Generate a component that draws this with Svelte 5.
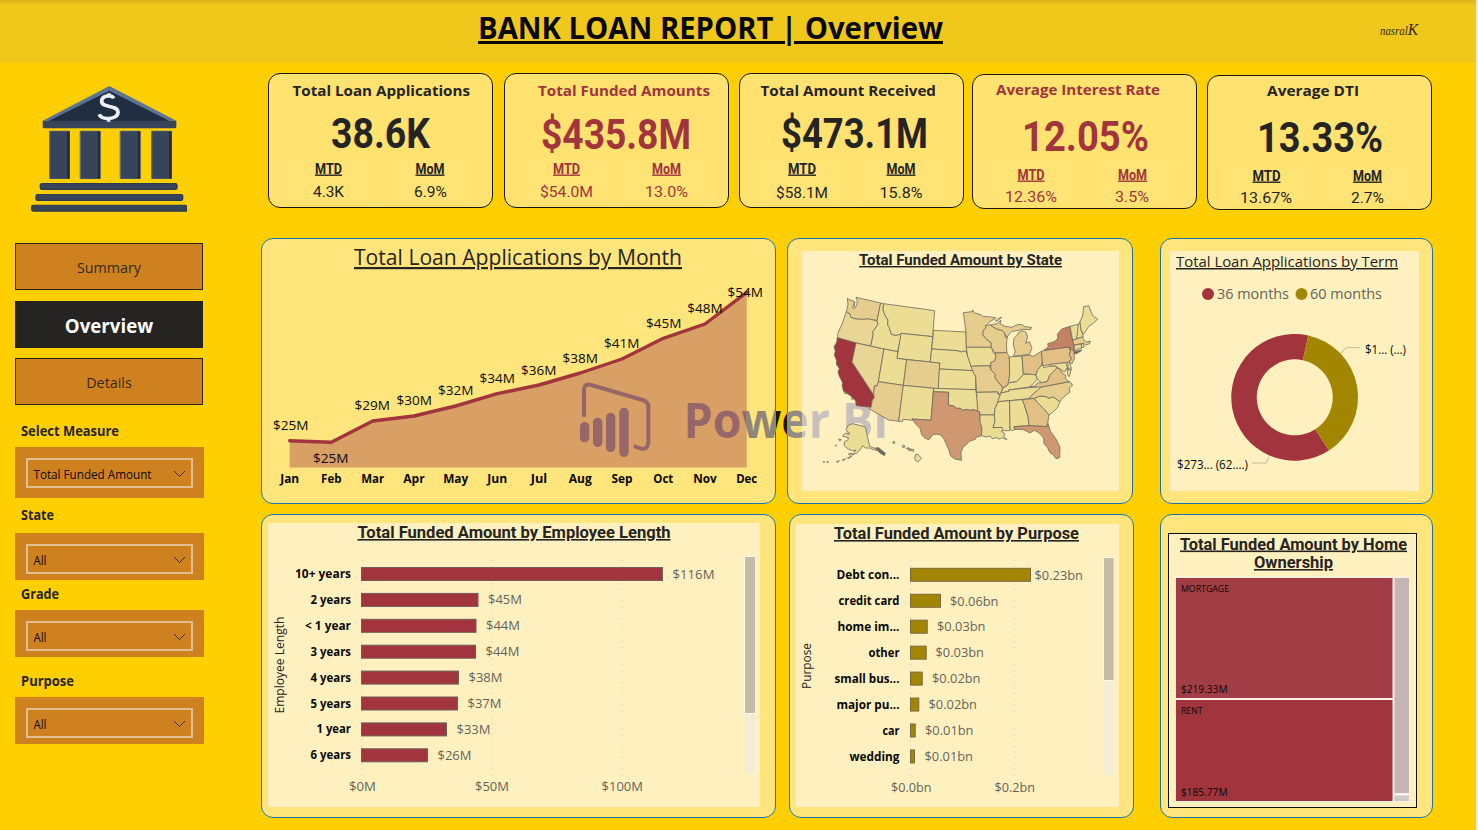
<script>
  // Text entries: [string, left x, baseline y, font size, drawn width]
  const kpis = [
    { x: 268, y: 73, gap: 0, tone: 'ink', title: ['Total Loan Applications', 292.5, 96, 15, 177.5], value: ['38.6K', 331, 148, 42.5, 99],
      heads: [['MTD', 315, 173.5, 14, 27], ['MoM', 415.5, 173.5, 14, 29]], subs: [['4.3K', 313, 197, 15.5, 31], ['6.9%', 414, 197, 15.5, 33]] },
    { x: 504, y: 73, gap: 11, tone: 'wine', title: ['Total Funded Amounts', 538, 96, 15, 172], value: ['$435.8M', 541, 149, 42.5, 150],
      heads: [['MTD', 553, 173.5, 14, 27], ['MoM', 652, 173.5, 14, 29]], subs: [['$54.0M', 540, 197, 15.5, 53], ['13.0%', 645, 197, 15.5, 43]] },
    { x: 739, y: 73, gap: 10, tone: 'ink', title: ['Total Amount Received', 760.5, 96, 15, 175.5], value: ['$473.1M', 781, 147.5, 42.5, 147],
      heads: [['MTD', 788, 173.5, 14, 28], ['MoM', 886.5, 173.5, 14, 29]], subs: [['$58.1M', 776, 198, 15.5, 52], ['15.8%', 879.5, 198, 15.5, 43]] },
    { x: 972, y: 74, gap: 8, tone: 'wine', title: ['Average Interest Rate', 996, 95, 15, 164], value: ['12.05%', 1022, 151, 42.5, 127],
      heads: [['MTD', 1017.5, 179.5, 14, 27], ['MoM', 1118, 179.5, 14, 29]], subs: [['12.36%', 1005, 202, 15.5, 52], ['3.5%', 1115, 202, 15.5, 34]] },
    { x: 1207, y: 75, gap: 10, tone: 'ink', title: ['Average DTI', 1267, 96, 15, 92], value: ['13.33%', 1257, 152, 42.5, 126],
      heads: [['MTD', 1252.5, 180.5, 14, 28], ['MoM', 1353, 180.5, 14, 29]], subs: [['13.67%', 1240, 203, 15.5, 52], ['2.7%', 1351, 203, 15.5, 33]] }
  ];

  const slicers = [
    { label: 'Select Measure', value: 'Total Funded Amount', top: 15, head: 27, h: 51, w: 98, vw: 118 },
    { label: 'State', value: 'All', top: 6, head: 29, h: 47, w: 33, vw: 13 },
    { label: 'Grade', value: 'All', top: 3, head: 27, h: 47, w: 38, vw: 13 },
    { label: 'Purpose', value: 'All', top: 13, head: 27, h: 47, w: 53, vw: 13 }
  ];

  const months = [
    ['Jan', 19, '$25M', 289.7, 440.7, 291, 430], ['Feb', 20.5, '$25M', 331.3, 442.3, 331, 463],
    ['Mar', 23, '$29M', 372.7, 421, 372.5, 410], ['Apr', 21.5, '$30M', 414, 416, 414.5, 405],
    ['May', 25, '$32M', 455.7, 406, 456, 395], ['Jun', 20, '$34M', 497.3, 393.7, 497.5, 383],
    ['Jul', 16.5, '$36M', 539, 385, 539, 375], ['Aug', 23, '$38M', 580.3, 373, 580.5, 363],
    ['Sep', 21, '$41M', 622, 359, 622, 348], ['Oct', 20, '$45M', 663.3, 338.3, 664, 328],
    ['Nov', 23.5, '$48M', 705, 324, 705.3, 313], ['Dec', 21, '$54M', 746.7, 292.3, 745.5, 297]
  ];
  const line = months.map((m) => `${m[3]},${m[4]}`).join(' ');

  const employee = [
    ['10+ years', 56, 663, '$116M', 42], ['2 years', 40.5, 478.5, '$45M', 34], ['< 1 year', 46, 476.5, '$44M', 34],
    ['3 years', 40.5, 476, '$44M', 34], ['4 years', 40.5, 459, '$38M', 34], ['5 years', 40.5, 458, '$37M', 34],
    ['1 year', 34.5, 447, '$33M', 34], ['6 years', 40.5, 428, '$26M', 34]
  ];
  const purpose = [
    ['Debt con...', 63, 1031, '$0.23bn', 1035], ['credit card', 61, 941, '$0.06bn', 950.5], ['home im...', 62, 927.7, '$0.03bn', 937.5],
    ['other', 31, 926.7, '$0.03bn', 936], ['small bus...', 65, 922.7, '$0.02bn', 932.5], ['major pu...', 63, 919.3, '$0.02bn', 929],
    ['car', 17, 915.7, '$0.01bn', 925.5], ['wedding', 50, 915, '$0.01bn', 925]
  ];

  const lo = '#ecdd95', a = '#e9d594', b = '#e7cd8d', c = '#e2bf85', d = '#cf9870', e = '#c48163', hi = '#a1343c';
  const states = [
    [b, '82,40 90,45 98,47 105,52 100,62 97,68 104,70 110,60 112,48 108,37 182,54 171,107 145,102 125,103 108,102 92,97 90,87 79,80 84,58'],
    [a, '79,80 90,87 92,97 108,102 125,103 145,102 171,107 174,118 163,134 158,140 160,148 152,183 108,174 52,158 54,143 66,118'],
    [hi, '52,158 108,174 96,231 161,330 163,338 157,346 153,367 109,362 107,348 96,336 88,330 76,322 70,317 66,300 68,294 58,274 54,262 58,250 49,238 50,227 43,210 46,198 42,185 50,172'],
    [a, '108,174 192,192 175,290 171,303 163,303 161,330 96,231'],
    [lo, '182,54 191,56 189,75 197,95 204,105 203,120 208,128 214,148 228,151 238,148 243,152 233,200 192,192 152,183 160,148 158,140 163,134 174,118 171,107'],
    [lo, '191,56 344,77 338,155 243,145 243,152 238,148 228,151 214,148 208,128 203,120 204,105 197,95 189,75'],
    [lo, '243,145 338,155 331,231 231,220'],
    [lo, '192,192 233,200 231,220 260,224 250,301 175,290'],
    [b, '175,290 250,301 236,409 206,405 147,371 153,367 157,346 163,338 161,330 163,303 171,303'],
    [b, '260,224 360,234 355,311 250,301'],
    [lo, '250,301 341,310 333,406 276,402 278,406 249,403 248,409 236,409'],
    [lo, '341,136 438,141 439,187 439,201 432,198 424,201 412,197 335,192'],
    [lo, '335,192 412,197 424,201 432,198 439,201 443,214 450,232 453,244 460,257 358,252 360,234 331,231'],
    [lo, '358,252 460,257 462,266 467,273 467,314 355,311'],
    [lo, '341,310 467,314 472,345 473,379 460,374 450,376 440,373 430,376 420,370 410,370 403,364 385,360 386,322 340,320'],
    [d, '340,320 386,322 385,360 403,364 410,370 420,370 430,376 440,373 450,376 460,374 479,380 480,410 486,430 484,452 468,457 466,463 448,469 436,482 430,485 423,502 424,526 405,522 391,512 387,495 378,476 372,462 362,450 348,447 337,450 327,464 315,460 305,449 300,430 288,418 276,402 333,406'],
    [b, '430,83 457,80 458,75 463,84 480,88 490,95 506,95 528,99 510,110 497,122 497,130 489,137 489,150 500,164 513,172 514,187 439,187 438,141'],
    [lo, '439,187 514,187 520,203 528,212 524,228 513,232 512,246 507,242 453,244 443,214'],
    [b, '453,244 507,242 513,255 526,268 525,278 535,292 545,303 548,310 543,324 537,328 533,321 470,322 467,273 462,266'],
    [a, '470,322 533,321 534,328 541,330 535,350 525,370 523,390 480,390 479,380 473,379'],
    [lo, '480,390 523,390 525,408 519,428 546,427 550,437 543,439 555,446 551,454 561,464 545,458 540,463 530,458 516,461 511,453 499,456 484,452 486,430 480,410'],
    [b, '497,122 510,120 530,132 548,137 554,144 556,158 563,150 559,178 561,203 525,204 514,187 513,172 500,164 489,150 489,137 497,130'],
    [c, '525,204 561,203 568,216 569,270 566,290 561,302 548,310 545,303 535,292 525,278 526,268 513,255 512,246 513,232 524,228 528,212'],
    [b, '510,120 530,116 543,106 540,116 555,124 575,127 595,118 608,120 614,125 635,127 632,134 607,133 590,137 576,139 568,147 560,157 554,144 548,137 530,132'],
    [b, '596,142 607,137 618,142 623,155 617,175 628,170 636,188 628,208 580,214 586,200 580,180 582,160 590,152'],
    [lo, '568,216 606,213 610,268 600,280 590,290 569,293 566,290 569,270'],
    [c, '606,213 628,210 640,214 664,199 668,225 665,240 652,256 648,270 630,268 610,266'],
    [lo, '543,324 550,308 561,302 569,293 590,290 600,280 610,268 630,268 648,270 652,283 640,296 628,306 566,315 567,319'],
    [lo, '533,350 543,324 567,319 566,315 664,304 660,314 645,322 625,341 569,347'],
    [lo, '535,350 569,347 570,437 550,437 546,427 519,428 525,408 523,390 525,370'],
    [lo, '569,347 608,344 624,395 627,422 582,425 584,434 576,437 570,432'],
    [c, '608,344 643,340 652,352 675,375 687,390 683,415 680,425 627,422 624,395'],
    [d, '582,425 627,422 680,425 684,415 692,440 708,462 720,487 719,518 708,521 699,508 690,503 682,487 672,476 671,459 655,442 643,436 630,444 610,434 584,433'],
    [lo, '643,340 660,333 680,335 684,340 700,336 720,350 713,367 700,380 687,390 675,375 652,352'],
    [b, '664,306 750,290 758,301 747,309 750,321 738,330 728,340 720,350 700,336 684,340 680,335 660,333 643,340 625,341 645,322'],
    [c, '628,306 645,303 652,294 665,293 682,289 688,272 697,262 710,248 722,253 724,262 738,272 736,280 747,290 664,306'],
    [lo, '652,256 665,240 669,240 671,248 684,245 690,243 706,243 711,249 697,262 688,272 682,289 665,293 652,283 648,270'],
    [c, '664,199 672,196 745,186 752,198 748,210 755,222 745,232 668,242'],
    [e, '672,196 685,185 683,176 703,170 714,160 712,148 725,132 750,124 753,150 760,175 763,200 785,196 770,206 762,206 745,186'],
    [c, '748,188 762,200 763,222 755,237 747,229 755,222 748,210 752,198'],
    [lo, '690,238 738,233 744,256 754,253 748,275 744,272 740,250 733,262 722,253 706,243 690,243'],
    [lo, '743,232 747,229 754,250 745,254'],
    [lo, '750,124 775,118 776,135 770,162 758,165'],
    [lo, '775,118 780,110 783,135 790,155 770,162'],
    [lo, '780,110 788,93 791,65 806,62 815,85 820,94 833,102 820,115 806,124 800,134 790,148 783,135'],
    [b, '758,165 788,156 792,166 800,171 811,168 809,176 797,180 792,175 762,180'],
    [a, '762,180 784,177 785,189 765,197'],
    [lo, '784,177 790,176 793,185 785,189'],
    [lo, '85,421 98,416 118,421 136,426 149,484 158,487 174,494 170,497 148,489 136,489 128,482 122,492 112,503 95,511 108,495 97,497 84,492 72,481 74,470 84,465 85,458 68,454 74,446 90,447 78,434']
  ];
  const islands = [
    '218,471 223,469 225,474 220,476', '246,483 252,480 255,486 249,488', '259,489 269,489 267,492 259,491', '265,494 271,492 272,497 267,497', '272,492 282,494 280,500 275,497',
    '287,508 294,508 304,520 295,530 286,526 284,518', '9,530 14,530 12,533', '21,529 26,531 23,533', '49,530 58,527 54,532', '67,525 77,521 71,527', '82,519 95,513 88,520',
    '56,462 64,464 59,468', '46,482 49,480 48,484', '85,507 96,505 90,511', '71,319 82,325 75,326', '95,338 99,344 94,341', '526,108 535,100 545,97 535,106'
  ];
</script>

{#snippet t(s, x, y, size, len, cls)}
  <text {x} {y} font-size={size} textLength={len} lengthAdjust="spacingAndGlyphs" class={cls}>{s}</text>
{/snippet}

{#snippet entry(v, cls)}
  {@render t(v[0], v[1], v[2], v[3], v[4], cls)}
{/snippet}

<div class="page">
  <header>
    <svg width="1476" height="63" viewBox="0 0 1476 63">
      {@render t('BANK LOAN REPORT | Overview', 478, 39, 30, 465, 'seg bold black u')}
      <text x="1380" y="35" font-size="12" textLength="38" lengthAdjust="spacingAndGlyphs" class="script">nasral<tspan font-size="17">K</tspan></text>
    </svg>
  </header>
  <div class="body">
    <aside>
      <svg class="bank" width="160" height="130" viewBox="80 105 480 390">
        <path d="M327,108 L528,212 H127Z" fill="#5c7494" />
        <path d="M327,122 L518,218 H134Z" fill="#212d40" />
        <path d="M127,212 H528 V231 Q528,235 523,235 H132 Q127,235 127,231Z" fill="#37445a" />
        {#each [146, 238, 358, 452] as x}
          <rect {x} y="242" width="63" height="145" rx="3" fill="#5d6f7f" />
          <rect x={x + 4} y="244" width="52" height="142" fill="#37445a" />
          <rect x={x + 54} y="244" width="8" height="142" fill="#212d40" />
        {/each}
        {#each [[118, 399, 414], [105, 432, 444], [92, 464, 470]] as [x, y, w]}
          <rect {x} {y} width={w} height="21" rx="7" fill="#2b384c" />
          <rect x={x + 4} y={y + 2} width={w - 8} height="15" rx="5" fill="#37445a" />
        {/each}
        <path d="M340,145 C336,134 304,134 304,154 C305,176 352,163 353,187 C352,210 302,211 297,193 M326,130 V137 M325,207 V215" fill="none" stroke="#eef0f8" stroke-width="11" stroke-linejoin="round" />
      </svg>
      <nav>
        <button>Summary</button>
        <button class="active">Overview</button>
        <button>Details</button>
      </nav>
      {#each slicers as s}
        <section class="slicer" style="padding-top:{s.top}px">
          <div class="slabel" style="height:{s.head}px">
            <svg width="150" height="22" viewBox="0 0 150 22">{@render t(s.label, 6, 16, 13.5, s.w, 'seg bold ink')}</svg>
          </div>
          <div class="sbox" style="height:{s.h}px">
            <div class="select">
              <svg width="136" height="26" viewBox="0 0 136 26">{@render t(s.value, 5.5, 19, 12, s.vw, 'seg black')}</svg>
              <svg class="chev" width="13" height="8" viewBox="0 0 13 8"><path d="M1 1 L6.5 6.5 L12 1" fill="none" stroke="#3b2b12" stroke-width="1" /></svg>
            </div>
          </div>
        </section>
      {/each}
    </aside>

    <main>
      <div class="kpis">
        {#each kpis as k}
          <article class="kpi {k.tone}" style="margin-left:{k.gap}px;margin-top:{k.y - 73}px">
            <svg width="223" height="133" viewBox="{k.x + 1} {k.y + 1} 223 133">
              <rect x={k.x + 18} y={k.y + 87} width="85" height="41" fill="#ffe374" />
              <rect x={k.x + 120} y={k.y + 87} width="85" height="41" fill="#ffe374" />
              {@render entry(k.title, 'seg bold')}
              {@render entry(k.value, 'din bold')}
              {#each k.heads as h}{@render entry(h, 'din bold u')}{/each}
              {#each k.subs as h}{@render entry(h, 'din')}{/each}
            </svg>
          </article>
        {/each}
      </div>

      <div class="row top">
        <section class="panel w1">
          <svg width="513" height="264" viewBox="262 239 513 264">
            {@render t('Total Loan Applications by Month', 354, 265, 22, 328, 'seg ink u medium')}
            <polygon points="289.7,467.5 {line} 746.7,467.5" fill="#d9a066" />
            <polyline points={line} fill="none" stroke="#a1343c" stroke-width="3.4" stroke-linejoin="round" stroke-linecap="round" />
            {#each months as m}
              {@render t(m[2], m[5] - 18, m[6], 13.5, 35.5, 'seg black')}
              {@render t(m[0], m[3] - m[1] / 2, 483, 12, m[1], 'seg bold black')}
            {/each}
          </svg>
        </section>

        <section class="panel w2">
          <svg class="under" width="344" height="264" viewBox="788 239 344 264">
            <rect x="802" y="251" width="317" height="240" fill="#fff1bf" />
          </svg>
          <svg class="map" width="344" height="264" viewBox="788 239 344 264">
            {@render t('Total Funded Amount by State', 859, 265, 14.5, 203, 'din bold ink u')}
            <g transform="translate(820 285) scale(.33333)" stroke="#6c6960" stroke-width="2.4" stroke-linejoin="round">
              {#each states as [fill, points]}<polygon {points} {fill} />{/each}
              {#each islands as points}<polygon {points} fill="#ecdd95" />{/each}
              <path d="M166,489 L176,488 L196,505 L193,512 L180,504Z" fill="#6c6960" />
              <path d="M50,240 L68,240 M102,48 L104,66" />
              <path d="M762,203 L786,195 L765,206Z" fill="#a1343c" />
            </g>
          </svg>
        </section>

        <section class="panel w3">
          <svg width="271" height="264" viewBox="1161 239 271 264">
            <rect x="1170" y="251" width="249" height="240" fill="#fff1bf" />
            {@render t('Total Loan Applications by Term', 1176, 267, 15, 222, 'seg ink u')}
            <circle cx="1208" cy="294" r="6" fill="#a1343c" />
            {@render t('36 months', 1217, 299, 15, 72, 'seg gray')}
            <circle cx="1301.5" cy="294" r="6" fill="#a38600" />
            {@render t('60 months', 1310, 299, 15, 72, 'seg gray')}
            <path d="M1308.3,335.4 A63.4,63.4 0 1 0 1329,450.6 L1315.3,429.3 A38,38 0 1 1 1302.8,360.2Z" fill="#a1343c" />
            <path d="M1308.3,335.4 A63.4,63.4 0 0 1 1329,450.6 L1315.3,429.3 A38,38 0 0 0 1302.8,360.2Z" fill="#a38600" />
            <path d="M1341,353 L1346,347.7 H1360.3 M1269.3,456.7 L1266,463 H1252" fill="none" stroke="#c1b797" />
            {@render t('$1... (...)', 1365, 354, 12, 41, 'seg black')}
            {@render t('$273... (62....)', 1177, 469, 12, 71, 'seg black')}
          </svg>
        </section>
      </div>

      <div class="row bottom">
        <section class="panel w1">
          <svg width="513" height="302" viewBox="262 515 513 302">
            <rect x="268" y="523" width="492" height="284" fill="#fff1bf" />
            {@render t('Total Funded Amount by Employee Length', 357.5, 538, 16, 313, 'din bold ink u')}
            {#each [362, 492, 622] as x}<line x1={x} x2={x} y1="560" y2="778" class="dots" />{/each}
            {#each employee as r, i}
              <rect x="361.5" y={567.5 + 25.9 * i} width={r[2] - 362} height="13" fill="#a1343c" stroke="#6e5f5a" />
              {@render t(r[0], 351 - r[1], 578 + 25.9 * i, 12, r[1], 'seg bold black')}
              {@render t(r[3], r[2] + 9.5, 578.5 + 25.9 * i, 13.5, r[4], 'light gray')}
            {/each}
            {@render t('$0M', 349, 791, 13.5, 27, 'light gray')}
            {@render t('$50M', 475, 791, 13.5, 34, 'light gray')}
            {@render t('$100M', 601.5, 791, 13.5, 41.5, 'light gray')}
            <g transform="translate(284 713.5) rotate(-90)">{@render t('Employee Length', 0, 0, 12, 97, 'seg ink')}</g>
            <rect x="745" y="557" width="10" height="217" fill="#f3edd5" />
            <rect x="745" y="557" width="10" height="156" fill="#c5bca8" />
            <path d="M744.5,556.5 H755 M744.5,713.5 H755 M744.5,557 V714" stroke="#fffdf0" />
          </svg>
        </section>

        <section class="panel w2 b">
          <svg width="343" height="302" viewBox="790 515 343 302">
            <rect x="795" y="524" width="324" height="283" fill="#fff1bf" />
            {@render t('Total Funded Amount by Purpose', 834, 539, 16, 245, 'din bold ink u')}
            {#each [910.5, 1014.5] as x}<line x1={x} x2={x} y1="560" y2="778" class="dots" />{/each}
            {#each purpose as r, i}
              <rect x="910.5" y={568.3 + 25.95 * i} width={r[2] - 911} height="13" fill="#a38600" stroke="#7b6841" />
              {@render t(r[0], 899.5 - r[1], 579 + 25.95 * i, 12, r[1], 'seg bold black')}
              {@render t(r[3], r[4] - 0.5, 579.6 + 25.9 * i, 13.5, 48.5, 'light gray')}
            {/each}
            {@render t('$0.0bn', 891, 792, 13.5, 40.5, 'light gray')}
            {@render t('$0.2bn', 994.5, 792, 13.5, 40.5, 'light gray')}
            <g transform="translate(811 689) rotate(-90)">{@render t('Purpose', 0, 0, 12, 46, 'seg ink')}</g>
            <rect x="1104" y="558" width="9.5" height="217" fill="#f3edd5" />
            <rect x="1104" y="558" width="9.5" height="122" fill="#c5bca8" />
            <path d="M1103.5,557.5 H1113.5 M1103.5,680.5 H1113.5 M1103.5,558 V681" stroke="#fffdf0" />
          </svg>
        </section>

        <section class="panel w3 b3">
          <svg width="271" height="302" viewBox="1161 515 271 302">
            <rect x="1168.5" y="533.5" width="248" height="274" fill="#fff1bf" stroke="#111" />
            {@render t('Total Funded Amount by Home', 1180, 549.5, 16, 227, 'din bold ink u')}
            {@render t('Ownership', 1254, 568, 16, 79, 'din bold ink u')}
            <rect x="1175" y="576.5" width="234.5" height="225.5" fill="#fdf1ea" />
            <rect x="1176" y="578" width="216.5" height="120" fill="#a33d45" />
            <rect x="1176" y="700" width="216.5" height="101" fill="#a1343c" />
            <rect x="1394.5" y="578" width="14.5" height="215" fill="#c6b5b6" />
            <rect x="1394.5" y="795.5" width="14.5" height="5.5" fill="#cbcbc8" />
            {@render t('MORTGAGE', 1181, 592, 9, 48, 'seg black')}
            {@render t('$219.33M', 1181, 692.5, 11, 46.5, 'seg black')}
            {@render t('RENT', 1181, 714, 9, 21.5, 'seg black')}
            {@render t('$185.77M', 1181, 795.5, 11, 46.5, 'seg black')}
          </svg>
        </section>
      </div>

      <svg class="mark" width="340" height="90" viewBox="560 370 340 90">
        <defs>
          <linearGradient id="tone" gradientUnits="userSpaceOnUse" x1="746" x2="802" y1="0" y2="0">
            <stop offset="0" stop-color="#976668" /><stop offset="0" stop-color="#8f8678" />
            <stop offset=".53" stop-color="#8f8678" /><stop offset=".53" stop-color="#1c1805" />
            <stop offset=".74" stop-color="#1c1805" /><stop offset=".74" stop-color="#948b84" />
            <stop offset="1" stop-color="#948b84" /><stop offset="1" stop-color="#c9bfbd" />
          </linearGradient>
        </defs>
        <g transform="translate(260 230) scale(.33333)" fill="none" stroke="#976668" stroke-linecap="round">
          <path stroke-width="12" d="M972,556 V482 Q972,459 994,465 L1148,510 Q1165,515 1165,530 V634 Q1165,659 1143,656 L1126,650" />
          <path stroke-width="28" d="M974,590 V623 M1013,577 V637 M1052,562 V652 M1092,547 V667" />
        </g>
        <text x="683.5" y="438" font-size="49" textLength="205" lengthAdjust="spacingAndGlyphs" class="seg bold" fill="url(#tone)">Power BI</text>
      </svg>
    </main>
  </div>
</div>

<style>
  :global(body) { margin: 0; background: #e8e6e2; overflow: hidden; }
  .page { width: 1476px; height: 830px; background: #ffcf02; overflow: hidden; }
  header { height: 63px; background: linear-gradient(#d9b41a, #efc81b 5px); }
  svg { display: block; flex: none; }
  .body { display: flex; height: 767px; }
  aside { width: 246px; padding-left: 15px; flex: none; }
  .bank { margin: 22px 0 0 11.7px; }
  nav { display: flex; flex-direction: column; gap: 10.5px; margin-top: 28px; }
  button { width: 188px; height: 47px; border: 1.5px solid #252423; background: #d0811f; color: #33291b; font: 14.3px 'Open Sans', 'Noto Sans', sans-serif; padding: 2px 0 0; border-radius: 0; }
  .active { background: #252423; color: #fff; font-size: 18.7px; font-weight: 700; padding-top: 3px; }
  .slabel { display: flex; align-items: flex-start; }
  .sbox { width: 189px; background: #d0811f; padding: 11px 11px 0; box-sizing: border-box; }
  .select { height: 30px; box-sizing: border-box; border: 2px solid #e2bf92; display: flex; align-items: center; justify-content: space-between; padding-right: 5px; }
  .select svg { overflow: visible; }
  .chev { margin-top: 2px; }
  main { position: relative; flex: 1; }
  .kpis { display: flex; align-items: flex-start; padding: 10px 0 0 7px; height: 165px; }
  .kpi { width: 225px; height: 135px; box-sizing: border-box; border: 1px solid #161616; border-radius: 12px; background: #ffe270; overflow: hidden; flex: none; }
  .kpi.ink { fill: #252423; }
  .kpi.wine { fill: #a1343c; }
  .row { display: flex; }
  .bottom { margin-top: 10px; }
  .panel { box-sizing: border-box; border: 1px solid #1c72ae; border-radius: 12px; background: #ffe57c; height: 266px; display: grid; overflow: hidden; flex: none; }
  .bottom .panel { height: 304px; }
  .panel svg { grid-area: 1 / 1; }
  .w1 { width: 515px; }
  .w2 { width: 346px; margin-left: 11px; }
  .w2.b { width: 345px; margin-left: 13px; }
  .w3 { width: 273px; margin-left: 27px; }
  .w3.b3 { margin-left: 26px; }
  .map { position: relative; z-index: 2; }
  .mark { position: absolute; left: 299px; top: 307px; z-index: 1; pointer-events: none; }
  .dots { stroke: #d3c5b4; stroke-width: 1; stroke-dasharray: 1 4.8; }
  .seg { font-family: 'Open Sans', 'Noto Sans', sans-serif; }
  .light { font-family: 'Open Sans', 'Noto Sans', sans-serif; font-weight: 400; }
  .din { font-family: Roboto, 'Liberation Sans', sans-serif; }
  .bold { font-weight: 700; }
  .medium { font-weight: 500; }
  .u { text-decoration: underline; }
  .black { fill: #090806; }
  .ink { fill: #252423; }
  .gray { fill: #66635b; }
  .script { font-family: 'Liberation Serif', serif; font-style: italic; fill: #30270a; }
</style>
